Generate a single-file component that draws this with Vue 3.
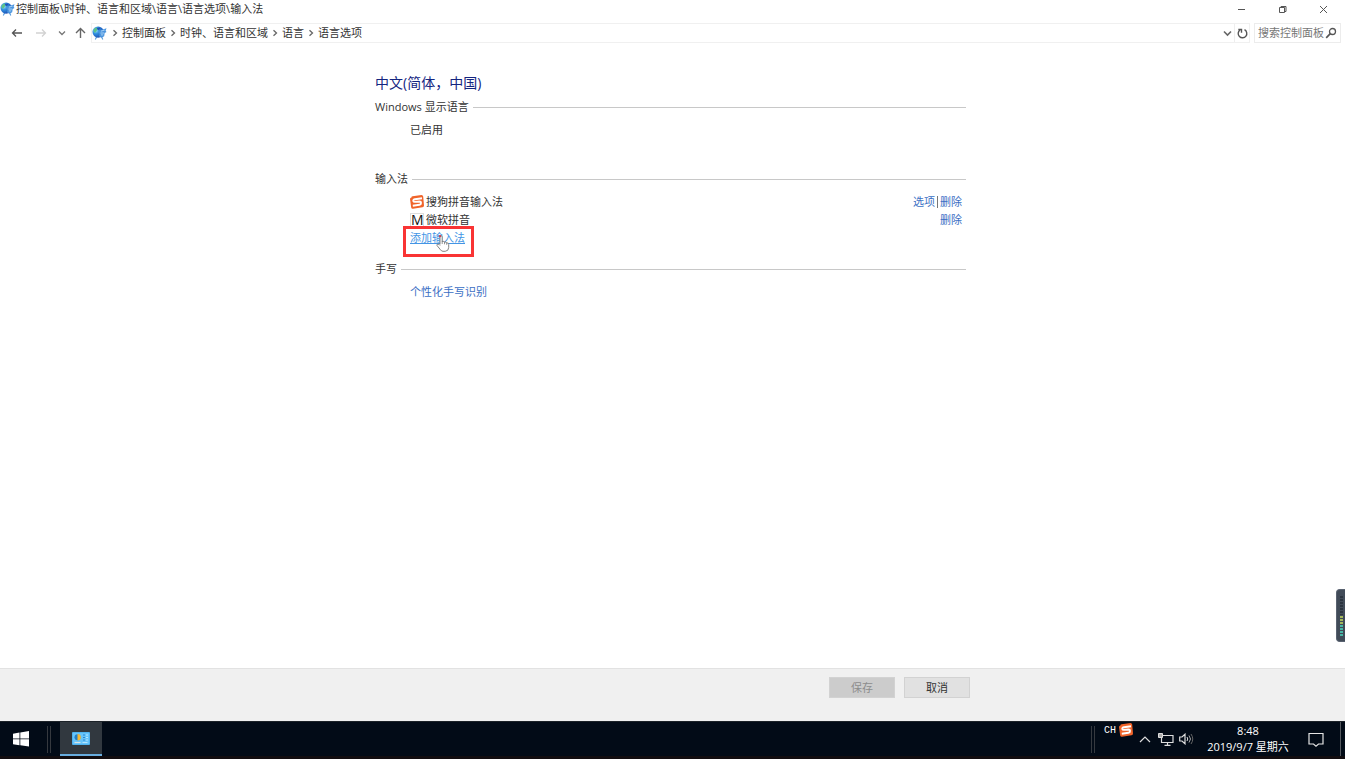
<script setup>
const crumbs = ['控制面板', '时钟、语言和区域', '语言', '语言选项']
const meter = Array.from({ length: 14 }, (_, i) => i)
</script>

<template>
  <div class="screen">
    <svg class="defs" width="0" height="0" aria-hidden="true">
      <defs>
        <radialGradient id="globeFill" cx="30%" cy="35%" r="75%">
          <stop offset="0" stop-color="#a5e6f2" />
          <stop offset="0.4" stop-color="#2f8fe0" />
          <stop offset="1" stop-color="#1c47ad" />
        </radialGradient>
      </defs>
      <symbol id="globe" viewBox="0 0 16 16">
        <path d="M5 11.500l-1.500 3M10 11l1.500 3.500" stroke="#5c9fdc" stroke-width="1.200" />
        <circle cx="6.500" cy="6.500" r="6" fill="url(#globeFill)" />
        <path d="M1.500 5q.5-2.500 3-3.500l1.500 1-1 2.500-2 2.500z" fill="#5cc487" />
        <path d="M5 2.500l3-1 1 1.500-2.500 1.500z" fill="#2450b4" />
        <path d="M8 4.500l2.500-.5 5-1.500-1 2.500 1 1.500-2 1-.5 3.500-3 1.500-2.500-1.500.5-2.500-1.500-2z" fill="#4a94de" />
        <path d="M9.500 5.500l4-1.200M9 7.500h4M9.500 9.500h2.500" stroke="#b9defa" stroke-width=".9" />
      </symbol>
      <symbol id="sogou" viewBox="0 0 14 14">
        <path d="M1.500 2.500Q1 1.500 2.500 1.300L11.500 0Q13 0 13.200 1.500L14 10.500Q14 12 12.500 12.300L3 13.800Q1.500 14 1.200 12.500L0 4Q0 2.800 1.500 2.500Z" fill="#f0642a" />
        <path d="M12 3.300L5 4.200Q3 4.500 3.300 6Q3.600 7 5 6.900L9.300 6.500Q11 6.500 11 8Q11 9.600 9.500 9.800L2.800 10.800" fill="none" stroke="#fff" stroke-width="1.900" />
      </symbol>
    </svg>

    <header class="titlebar">
      <svg class="globe"><use href="#globe" /></svg>
      <span class="title">控制面板\时钟、语言和区域\语言\语言选项\输入法</span>
      <div class="controls">
        <button type="button" aria-label="最小化"><svg width="9" height="9" viewBox="0 0 9 9"><path d="M1 4.500h7" /></svg></button>
        <button type="button" aria-label="还原"><svg width="9" height="9" viewBox="0 0 9 9"><path d="M1.500 2.500h5v5h-5zM3 2.500v-1h5v5h-1.500" /></svg></button>
        <button type="button" aria-label="关闭"><svg width="9" height="9" viewBox="0 0 9 9"><path d="M1 1l7 7M8 1l-7 7" /></svg></button>
      </div>
    </header>

    <nav class="navbar" aria-label="导航">
      <button type="button" class="nav-btn" aria-label="后退"><svg width="12" height="10" viewBox="0 0 12 10"><path d="M11 5H1.500M5 1.500L1.500 5 5 8.500" stroke="#555" stroke-width="1.300" /></svg></button>
      <button type="button" class="nav-btn" aria-label="前进" disabled><svg width="12" height="10" viewBox="0 0 12 10"><path d="M1 5h9.500M7 1.500L10.500 5 7 8.500" stroke="#d2d2d2" stroke-width="1.300" /></svg></button>
      <button type="button" class="nav-btn small" aria-label="最近位置"><svg width="8" height="6" viewBox="0 0 8 6"><path d="M1 1.500l3 3 3-3" stroke="#777" stroke-width="1.300" /></svg></button>
      <button type="button" class="nav-btn up" aria-label="向上"><svg width="11" height="12" viewBox="0 0 11 12"><path d="M5.500 11V1.500M1 6l4.500-4.500L10 6" stroke="#666" stroke-width="1.400" /></svg></button>
      <div class="address">
        <svg class="globe"><use href="#globe" /></svg>
        <template v-for="crumb in crumbs" :key="crumb">
          <svg class="chev" width="6" height="8" viewBox="0 0 6 8"><path d="M1.500 1.200l3 2.800-3 2.800" stroke="#666" stroke-width="1.300" /></svg>
          <a href="#" class="crumb">{{ crumb }}</a>
        </template>
        <button type="button" class="addr-btn drop" aria-label="展开"><svg width="9" height="7" viewBox="0 0 9 7"><path d="M1 1.500l3.500 3.500L8 1.500" stroke="#666" stroke-width="1.600" /></svg></button>
        <button type="button" class="addr-btn refresh" aria-label="刷新"><svg width="11" height="11" viewBox="0 0 11 11"><path d="M7.500 1.700A4.300 4.300 0 1 1 3 2M1.300 1.500H4.500V4.700" stroke="#555" stroke-width="1.400" /></svg></button>
      </div>
      <form class="search" @submit.prevent>
        <input type="text" placeholder="搜索控制面板" aria-label="搜索控制面板" />
        <svg width="12" height="12" viewBox="0 0 12 12"><circle cx="7.500" cy="4.500" r="3" stroke="#555" stroke-width="1.300" /><path d="M5.300 6.700L1.200 10.800" stroke="#555" stroke-width="1.700" /></svg>
      </form>
    </nav>

    <main class="page">
      <div class="content">
        <h1>中文(简体，中国)</h1>
        <section>
          <h2>Windows 显示语言</h2>
          <div class="body"><p class="row">已启用</p></div>
        </section>
        <section class="methods">
          <h2>输入法</h2>
          <div class="body">
            <div class="row">
              <svg class="ime"><use href="#sogou" /></svg>
              <span>搜狗拼音输入法</span>
              <span class="actions"><a href="#">选项</a><i class="bar"></i><a href="#">删除</a></span>
            </div>
            <div class="row">
              <span class="ime letter">M</span>
              <span>微软拼音</span>
              <span class="actions"><a href="#">删除</a></span>
            </div>
            <div class="row">
              <span class="add">
                <a href="#">添加输入法</a>
                <span class="frame"></span>
                <svg class="hand" width="14" height="17" viewBox="0 0 14 17"><path d="M4 9.500V2q0-1.300 1.100-1.300T6.200 2v4.500q2-.7 2.300.6 1.900-.6 2.200.7 2-.2 2 1.700v3q0 3.500-3.500 3.800H7q-1.500 0-2.500-1.500L1 10.500q-.5-1.500 1-1.500 1 0 2 1.500" fill="#fff" stroke="#777" stroke-width=".9" /><path d="M6.200 6v3M8.500 7v2.300M10.700 8v1.800" stroke="#777" stroke-width=".8" /><circle cx="4" cy="1.200" r="1.100" fill="#d33b52" /></svg>
              </span>
            </div>
          </div>
        </section>
        <section class="writing">
          <h2>手写</h2>
          <div class="body"><p class="row"><a href="#">个性化手写识别</a></p></div>
        </section>
      </div>
    </main>

    <footer class="footer">
      <div class="buttons">
        <button type="button" disabled>保存</button>
        <button type="button">取消</button>
      </div>
    </footer>

    <div class="taskbar">
      <button type="button" class="start" aria-label="开始">
        <svg width="16" height="16" viewBox="0 0 16 16"><path d="M0 2.700L6.500 1.600V7.500H0zM7.300 1.500L16 0V7.500H7.300zM0 8.300H6.500V14.200L0 13.300zM7.300 8.300H16V15.500L7.300 14.300z" fill="#fff" /></svg>
      </button>
      <i class="grip"></i>
      <button type="button" class="app" aria-label="控制面板">
        <svg width="18" height="13" viewBox="0 0 18 13"><rect width="18" height="13" rx="1" fill="#4fb3f0" /><rect x="1" y="1" width="16" height="11" fill="#67c4fa" /><circle cx="5.500" cy="5.300" r="3" fill="#257dc4" /><path d="M5.500 5.300V2a3.300 3.300 0 0 1 0 6.600z" fill="#f7b832" /><path d="M2.500 10.500h6" stroke="#d8e5e5" stroke-width="1.200" /><path d="M11 3h2M11 5.500h2M11 8h2" stroke="#2c86d0" /><path d="M14 3h2M14 5.500h2M14 8h2M10.500 10.500h5" stroke="#b5e5ff" /></svg>
      </button>
      <div class="tray">
        <i class="grip"></i>
        <span class="lang">CH</span>
        <svg class="tray-sogou"><use href="#sogou" /></svg>
        <button type="button" class="more" aria-label="显示隐藏的图标"><svg width="12" height="7" viewBox="0 0 12 7"><path d="M1 6l5-5 5 5" stroke="#ddd" stroke-width="1.200" /></svg></button>
        <button type="button" class="net" aria-label="网络"><svg width="16" height="13" viewBox="0 0 16 13"><path d="M5 2.500h10v7H3.500V5M9.500 9.500V12M6.500 12.300h6" stroke="#ddd" stroke-width="1.200" /><path d="M.5.500h4v4h-4z" stroke="#ddd" fill="#aaa" /></svg></button>
        <button type="button" class="sound" aria-label="音量"><svg width="15" height="12" viewBox="0 0 15 12"><path d="M.7 4h2.300L6 1.200v9.600L3 8H.7z" stroke="#ddd" stroke-width="1.200" /><path d="M8 4q1.500 2 0 4" stroke="#ddd" /><path d="M10 2.500q3 3.500 0 7" stroke="#aaa" /><path d="M12 1q3.500 5 0 10" stroke="#666" /></svg></button>
        <button type="button" class="clock"><span>8:48</span><span>2019/9/7 星期六</span></button>
        <button type="button" class="notes" aria-label="通知"><svg width="16" height="15" viewBox="0 0 16 15"><path d="M1 1.500h14v10.500h-4.500L8 14.200 5.500 12H1z" stroke="#e5e5e5" stroke-width="1.200" /></svg></button>
        <i class="desktop"></i>
      </div>
    </div>

    <aside class="meter" aria-hidden="true">
      <i v-for="n in meter" :key="n" :class="{ off: n < 7, yellow: n >= 7 && n < 10 }"></i>
    </aside>
  </div>
</template>

<style>
body {
  margin: 0;
}
</style>

<style scoped>
.screen {
  position: relative;
  display: flex;
  flex-direction: column;
  min-height: 100vh;
  background: #fff;
  color: #333;
  font-family: "Open Sans", "Noto Sans CJK SC", sans-serif;
  font-size: 11px;
  line-height: 18px;
}
.screen * {
  box-sizing: border-box;
}
svg {
  display: block;
  flex: none;
  fill: none;
}
.defs {
  position: absolute;
}
button {
  display: flex;
  align-items: center;
  justify-content: center;
  padding: 0;
  border: 0;
  background: none;
  color: inherit;
  font: inherit;
}
a {
  color: #3b6fc4;
  text-decoration: none;
}
.globe {
  width: 15px;
  height: 15px;
}
.titlebar {
  display: flex;
  align-items: center;
  height: 18px;
  gap: 1px;
}
.title {
  white-space: nowrap;
}
.controls {
  display: flex;
  margin-left: auto;
  padding-right: 1px;
}
.controls button {
  width: 41px;
  height: 18px;
}
.controls path {
  stroke: #555;
}
.navbar {
  display: flex;
  align-items: center;
  height: 20px;
  margin-top: 5px;
  padding: 0 4px 0 5px;
}
.nav-btn {
  width: 24px;
  height: 18px;
}
.nav-btn.small {
  width: 18px;
}
.nav-btn.up {
  width: 18px;
  margin-right: 2px;
}
.address {
  display: flex;
  flex: 1;
  align-items: center;
  height: 20px;
  border: 1px solid #f0f0f0;
}
.address .globe {
  margin-right: 1px;
}
.chev {
  margin: 0 4px;
}
.crumb {
  color: #333;
}
.drop {
  width: 14px;
  margin-left: auto;
}
.refresh {
  width: 15px;
  height: 18px;
  border-left: 1px solid #eee;
}
.search {
  display: flex;
  align-items: center;
  width: 87px;
  height: 20px;
  margin-left: 4px;
  padding: 0 3px;
  border: 1px solid #ececec;
}
.search input {
  flex: 1;
  min-width: 0;
  padding: 0;
  border: 0;
  outline: 0;
  background: none;
  color: #333;
  font: inherit;
}
.search input::placeholder {
  color: #777;
}
.page {
  flex: 1;
  padding: 28px 0 20px;
}
.content {
  max-width: 595px;
  margin: 0 auto;
  padding-right: 4px;
}
h1 {
  margin: 0 0 1px;
  color: #14257f;
  font-size: 14px;
  font-weight: 400;
  line-height: 24px;
}
h2 {
  display: flex;
  align-items: center;
  gap: 4px;
  margin: 0;
  font-size: 11px;
  font-weight: 400;
  line-height: 22px;
}
h2::after {
  flex: 1;
  height: 1px;
  background: #c8c8c8;
  content: "";
}
.body {
  padding: 3px 4px 0 35px;
}
.methods {
  margin-top: 29px;
}
.writing {
  margin-top: 11px;
}
.row {
  display: flex;
  align-items: center;
  gap: 2px;
  height: 18px;
  margin: 0;
}
.ime {
  width: 14px;
  height: 14px;
}
.letter {
  border: 1px solid #ddd;
  color: #111;
  font-size: 14px;
  line-height: 12px;
  text-align: center;
}
.actions {
  display: flex;
  align-items: center;
  gap: 2px;
  margin-left: auto;
}
.bar {
  width: 1px;
  height: 12px;
  background: #777;
}
.add {
  position: relative;
}
.add a {
  color: #4395e5;
  text-decoration: underline;
}
.frame {
  position: absolute;
  top: -3px;
  left: -7px;
  width: 71px;
  height: 31px;
  border: 3px solid #f93434;
}
.hand {
  position: absolute;
  top: 6px;
  left: 26px;
}
.footer {
  height: 53px;
  padding-top: 8px;
  border-top: 1px solid #e2e2e2;
  background: #f0f0f0;
}
.buttons {
  display: flex;
  justify-content: flex-end;
  gap: 9px;
  max-width: 595px;
  margin: 0 auto;
}
.buttons button {
  width: 66px;
  height: 21px;
  border: 1px solid #d2d2d2;
  background: #e1e1e1;
}
.buttons button:disabled {
  background: #cccccc;
  color: #8c8c8c;
}
.taskbar {
  display: flex;
  align-items: center;
  height: 38px;
  border-top: 1px solid #1c2228;
  border-bottom: 3px solid #120d10;
  background: #020b17;
  color: #fff;
}
.start {
  width: 42px;
  height: 34px;
}
.grip {
  width: 4px;
  height: 27px;
  border: solid #35393f;
  border-width: 0 1px;
}
.start + .grip {
  margin: 0 9px 0 5px;
}
.app {
  width: 42px;
  height: 34px;
  border-bottom: 2px solid #68addf;
  background: #31383f;
}
.tray {
  display: flex;
  align-items: center;
  height: 34px;
  margin-left: auto;
}
.lang {
  align-self: flex-start;
  margin-left: 9px;
  font-family: "Liberation Mono", monospace;
  font-size: 10px;
}
.tray-sogou {
  align-self: flex-start;
  width: 14px;
  height: 14px;
  margin: 1px 0 0 3px;
}
.more {
  margin-left: 6px;
}
.net {
  margin-left: 7px;
}
.sound {
  margin-left: 5px;
}
.clock {
  flex-direction: column;
  width: 100px;
  margin-left: 4px;
  line-height: 16px;
  white-space: nowrap;
}
.notes {
  margin-left: 10px;
}
.desktop {
  width: 1px;
  height: 34px;
  margin: 0 4px 0 16px;
  background: #555a60;
}
.meter {
  position: absolute;
  right: 0;
  bottom: 117px;
  display: flex;
  flex-direction: column;
  gap: 1px;
  width: 9px;
  height: 53px;
  padding: 6px 2px 5px 3px;
  border: 1px solid #596270;
  border-right: 0;
  border-radius: 4px 0 0 4px;
  background: #414b58;
}
.meter i {
  flex: 1;
  background: #48b5a5;
}
.meter .yellow {
  background: #a3b85b;
}
.meter .off {
  background: #2b343f;
}
</style>
